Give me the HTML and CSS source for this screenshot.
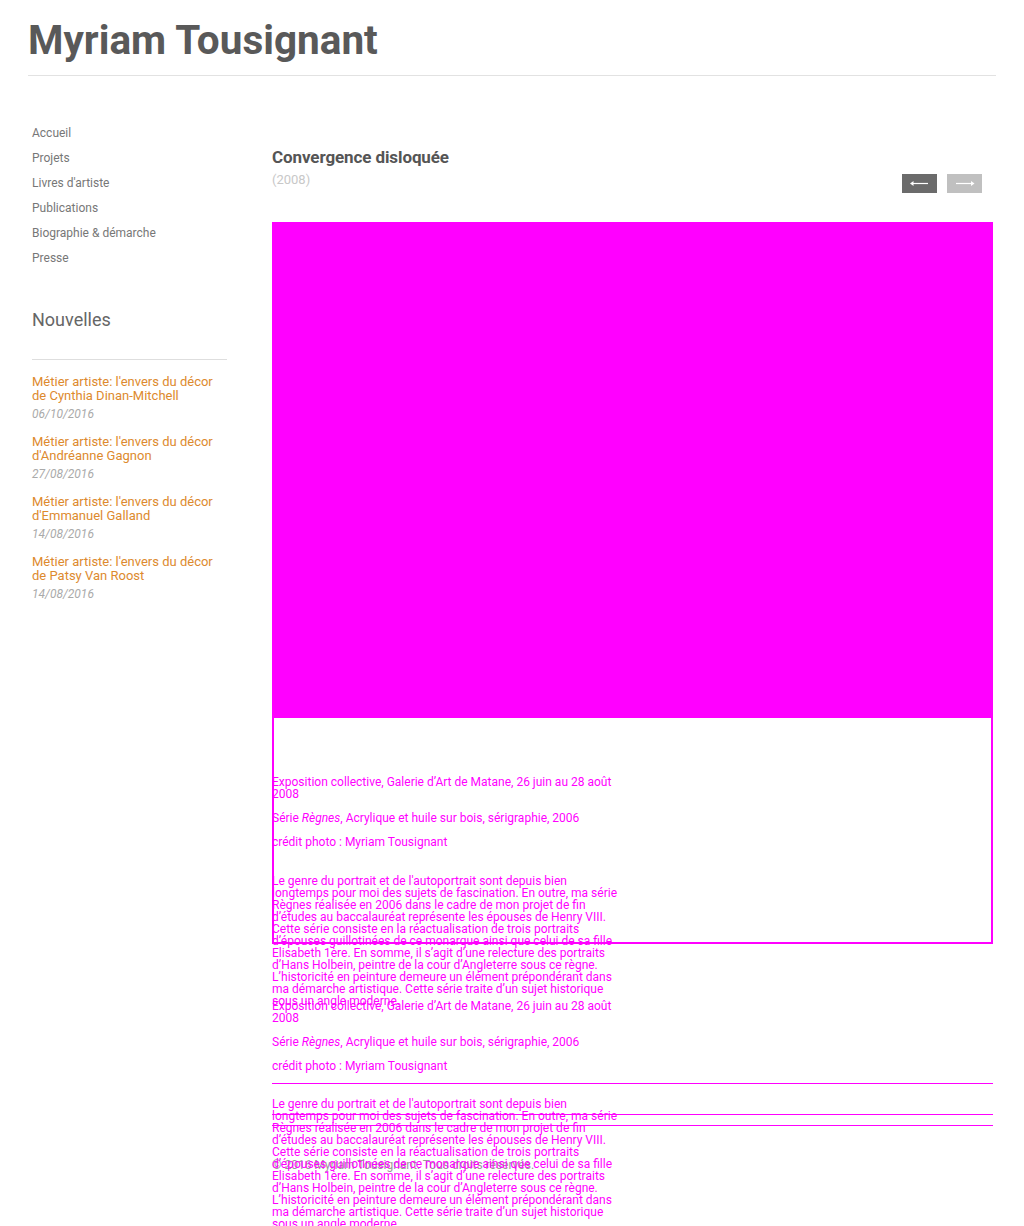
FILE: index.html
```html
<!DOCTYPE html>
<html lang="fr">
<head>
<meta charset="utf-8">
<title>Myriam Tousignant</title>
<link rel="stylesheet" href="styles.css">
</head>
<body>
<div class="page">
  <header class="site-header">
    <h1 class="site-title">Myriam Tousignant</h1>
  </header>
  <div class="layout">
    <aside class="sidebar">
      <nav class="menu">
        <a class="menu-link" href="#">Accueil</a>
        <a class="menu-link" href="#">Projets</a>
        <a class="menu-link" href="#">Livres d'artiste</a>
        <a class="menu-link" href="#">Publications</a>
        <a class="menu-link" href="#">Biographie &amp; démarche</a>
        <a class="menu-link" href="#">Presse</a>
      </nav>
      <section class="news">
        <h2 class="news-title">Nouvelles</h2>
        <ul class="news-list">
          <li class="news-item"><a class="news-link" href="#">Métier artiste: l'envers du décor de Cynthia Dinan-Mitchell</a><span class="news-date">06/10/2016</span></li>
          <li class="news-item"><a class="news-link" href="#">Métier artiste: l'envers du décor d'Andréanne Gagnon</a><span class="news-date">27/08/2016</span></li>
          <li class="news-item"><a class="news-link" href="#">Métier artiste: l'envers du décor d'Emmanuel Galland</a><span class="news-date">14/08/2016</span></li>
          <li class="news-item"><a class="news-link" href="#">Métier artiste: l'envers du décor de Patsy Van Roost</a><span class="news-date">14/08/2016</span></li>
        </ul>
      </section>
    </aside>
    <main class="content">
      <div class="project-head">
        <div class="project-info">
          <h2 class="project-title">Convergence disloquée</h2>
          <div class="project-year">(2008)</div>
        </div>
        <div class="pager">
          <a class="pager-btn pager-prev" href="#"><svg width="35" height="19" viewBox="0 0 35 19"><line x1="10" y1="9.5" x2="26" y2="9.5" stroke="#fff" stroke-width="1.2"/><polygon points="8,9.5 11.5,7 11.5,12" fill="#fff"/></svg></a>
          <a class="pager-btn pager-next" href="#"><svg width="35" height="19" viewBox="0 0 35 19"><line x1="9" y1="9.5" x2="25" y2="9.5" stroke="#fff" stroke-width="1.2"/><polygon points="27.5,9.5 24,7 24,12" fill="#fff"/></svg></a>
        </div>
      </div>
      <div class="slider">
        <div class="slide-image"></div>
        <div class="slide-caption slide-caption-framed">
          <div class="caption-text">
            <p class="caption-line">Exposition collective, Galerie d’Art de Matane, 26 juin au 28 août 2008</p>
            <p class="caption-line">Série <em>Règnes</em>, Acrylique et huile sur bois, sérigraphie, 2006</p>
            <p class="caption-line">crédit photo : Myriam Tousignant</p>
            <hr class="caption-rule caption-rule-hidden">
            <p class="caption-body">Le genre du portrait et de l'autoportrait sont depuis bien longtemps pour moi des sujets de fascination. En outre, ma série Règnes réalisée en 2006 dans le cadre de mon projet de fin d’études au baccalauréat représente les épouses de Henry VIII. Cette série consiste en la réactualisation de trois portraits d’épouses guillotinées de ce monarque ainsi que celui de sa fille Elisabeth 1ère. En somme, il s’agit d’une relecture des portraits d’Hans Holbein, peintre de la cour d’Angleterre sous ce règne. L’historicité en peinture demeure un élément prépondérant dans ma démarche artistique. Cette série traite d’un sujet historique sous un angle moderne.</p>
          </div>
        </div>
        <div class="slide-caption slide-caption-plain">
          <div class="caption-text">
            <p class="caption-line">Exposition collective, Galerie d’Art de Matane, 26 juin au 28 août 2008</p>
            <p class="caption-line">Série <em>Règnes</em>, Acrylique et huile sur bois, sérigraphie, 2006</p>
            <p class="caption-line">crédit photo : Myriam Tousignant</p>
            <hr class="caption-rule">
            <p class="caption-body">Le genre du portrait et de l'autoportrait sont depuis bien longtemps pour moi des sujets de fascination. En outre, ma série Règnes réalisée en 2006 dans le cadre de mon projet de fin d’études au baccalauréat représente les épouses de Henry VIII. Cette série consiste en la réactualisation de trois portraits d’épouses guillotinées de ce monarque ainsi que celui de sa fille Elisabeth 1ère. En somme, il s’agit d’une relecture des portraits d’Hans Holbein, peintre de la cour d’Angleterre sous ce règne. L’historicité en peinture demeure un élément prépondérant dans ma démarche artistique. Cette série traite d’un sujet historique sous un angle moderne.</p>
          </div>
        </div>
        <div class="slider-rule"></div>
        <footer class="site-footer">© 2016 Myriam Tousignant. Tous droits réservés.</footer>
      </div>
    </main>
  </div>
</div>
</body>
</html>
```

FILE: styles.css
```css
html, body {
  margin: 0;
  padding: 0;
  background: #fff;
}

body {
  font-family: Roboto, "Liberation Sans", Arial, sans-serif;
  color: #555;
}

.page {
  width: 968px;
  margin: 0 28px;
  padding-bottom: 120px;
}

.site-header {
  padding-top: 16px;
  padding-bottom: 11px;
  border-bottom: 1px solid #e2e2e2;
}

.site-title {
  margin: 0;
  font-size: 40.5px;
  line-height: 48px;
  font-weight: 700;
  color: #595959;
}

.layout {
  display: flex;
  align-items: flex-start;
}

.sidebar {
  width: 244px;
  flex: none;
  padding-top: 45px;
}

.menu {
  display: flex;
  flex-direction: column;
  padding-left: 4px;
}

.menu-link {
  font-size: 12px;
  line-height: 25px;
  color: #777;
  text-decoration: none;
}

.news {
  width: 195px;
  margin-left: 4px;
  margin-top: 38px;
}

.news-title {
  margin: 0;
  font-size: 18px;
  line-height: 22px;
  font-weight: 400;
  color: #666;
  padding-bottom: 28px;
  border-bottom: 1px solid #dedede;
}

.news-list {
  list-style: none;
  margin: 0;
  padding: 15px 0 0;
}

.news-item {
  margin-bottom: 14px;
}

.news-link {
  display: block;
  font-size: 13px;
  line-height: 14px;
  color: #dd8a2e;
  text-decoration: none;
}

.news-date {
  display: block;
  margin-top: 4px;
  font-size: 12px;
  line-height: 14px;
  font-style: italic;
  color: #aaa;
}

.content {
  flex: 1;
  padding-top: 71px;
}

.project-head {
  display: flex;
  justify-content: space-between;
  align-items: flex-start;
  width: 721px;
  margin-bottom: 29px;
}

.project-title {
  margin: 0;
  font-size: 17px;
  line-height: 20px;
  font-weight: 700;
  color: #555;
  letter-spacing: -0.1px;
}

.project-year {
  margin-top: 5px;
  font-size: 13px;
  line-height: 16px;
  color: #c8c8c8;
}

.pager {
  display: flex;
  gap: 10px;
  margin-top: 27px;
  margin-right: 11px;
}

.pager-btn {
  display: block;
  width: 35px;
  height: 19px;
}

.pager-btn svg {
  display: block;
}

.pager-prev {
  background: #6b6b6b;
}

.pager-next {
  background: #c0c0c0;
}

.slider {
  width: 721px;
}

.slide-image {
  height: 496px;
  background: #ff00ff;
}

.slide-caption {
  position: relative;
}

.slide-caption-framed {
  border: 2px solid #ff00ff;
  border-top: 0;
  padding-top: 58px;
  box-sizing: border-box;
  height: 226px;
}

.slide-caption-framed .caption-text {
  margin-left: -2px;
}

.slide-caption-plain {
  padding-top: 56px;
  box-sizing: border-box;
  height: 171px;
  border-bottom: 1px solid #ff00ff;
}

.caption-text {
  width: 348px;
  font-size: 12px;
  line-height: 12px;
  font-weight: 400;
  color: #ff00ff;
  -webkit-font-smoothing: none;
}

.caption-line {
  margin: 0 0 12px;
}

.caption-line:nth-child(3) {
  margin-bottom: 0;
}

.caption-rule {
  width: 721px;
  margin: 11px 0 15px;
  border: 0;
  border-top: 1px solid #ff00ff;
  height: 0;
}

.slide-caption-plain .caption-rule {
  margin-bottom: 14px;
}

.caption-rule-hidden {
  border-top-color: transparent;
}

.caption-body {
  margin: 0;
}

.slider-rule {
  margin-top: 10px;
  border-top: 1px solid #ff00ff;
}

.site-footer {
  padding-top: 32px;
  font-size: 12px;
  line-height: 14px;
  color: #999;
}
```
